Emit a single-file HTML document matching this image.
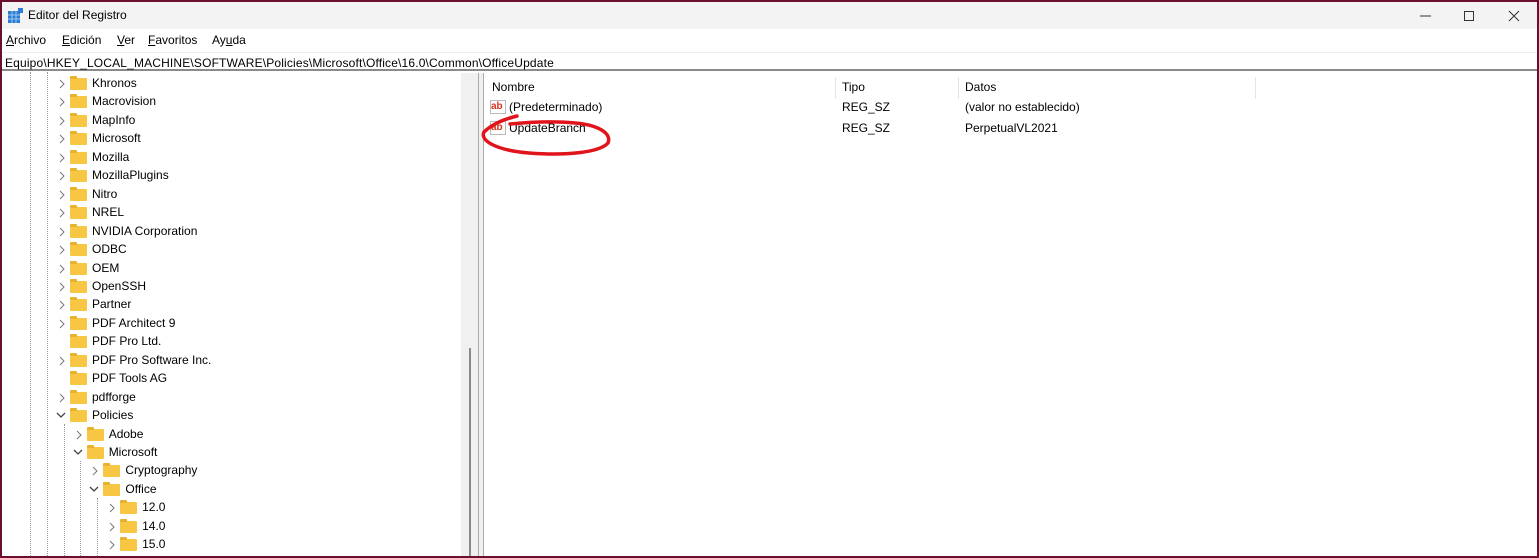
<!DOCTYPE html>
<html><head><meta charset="utf-8"><style>
*{margin:0;padding:0;box-sizing:border-box}
body{width:1539px;height:558px;overflow:hidden;background:#6b0f2e;font-family:"Liberation Sans",sans-serif;font-size:12px;color:#000;position:relative}
.win{position:absolute;left:2px;top:2px;width:1535px;height:554px;background:#fff;overflow:hidden}
.title{position:absolute;left:0;top:0;width:100%;height:27px;background:#f3f3f3}
.title span{position:absolute;left:26px;top:6px;font-size:12px}
.menu{position:absolute;top:31px;font-size:12px}
.menu span{position:absolute;white-space:nowrap}
.addr{position:absolute;top:50px;left:0;width:100%;height:19px;border-top:1px solid #eee;border-bottom:2px solid #8a8a8a}
.addr span{position:absolute;left:3px;top:3px;letter-spacing:0.16px}
.r{position:absolute;white-space:nowrap}
.f{position:absolute;width:17px;height:12px;background:#f7c744;border-radius:1px}
.f:before{content:"";position:absolute;left:0;top:-2px;width:7px;height:3px;background:#e8b22e;border-radius:1px 1px 0 0}
.vl{position:absolute;border-left:1px dotted #999;width:0}
</style></head><body><div class="win">
<div class="title">
<svg style="position:absolute;left:6px;top:6px" width="15" height="15"><rect x="0" y="3" width="12" height="12" fill="#2b7cd3"/><path d="M0 7H12M0 11H12M4 3V15M8 3V15" stroke="#9cc8f0" stroke-width="1"/><rect x="10" y="0" width="5" height="5" fill="#2b7cd3"/></svg>
<span>Editor del Registro</span>
<svg style="position:absolute;left:1415px;top:8px" width="115" height="14"><path d="M3 6H14" stroke="#333"/><path d="M47.5 1.5h9v9h-9z" fill="none" stroke="#333"/><path d="M92 1l10 10M102 1L92 11" stroke="#333"/></svg>
</div>
<div class="menu"><span style="left:4px"><u>A</u>rchivo</span><span style="left:60px"><u>E</u>dición</span><span style="left:115px"><u>V</u>er</span><span style="left:146px"><u>F</u>avoritos</span><span style="left:210px">Ay<u>u</u>da</span></div>
<div class="addr"><span>Equipo\HKEY_LOCAL_MACHINE\SOFTWARE\Policies\Microsoft\Office\16.0\Common\OfficeUpdate</span></div>
<div id="tree" style="position:absolute;left:0;top:70px;width:459px;height:484px"></div>
<div style="position:absolute;left:459px;top:71px;width:17px;height:483px;background:#f0f0f0"></div>
<div style="position:absolute;left:467px;top:346px;width:2px;height:210px;background:#8a8a8a"></div>
<div style="position:absolute;left:476px;top:71px;width:1px;height:483px;background:#aaa"></div>
<div style="position:absolute;left:481px;top:71px;width:1px;height:483px;background:#aaa"></div>
<div style="position:absolute;left:477px;top:71px;width:4px;height:483px;background:#f0f0f0"></div>
<div class="r" style="left:490px;top:78px">Nombre</div>
<div style="position:absolute;left:833px;top:75px;width:1px;height:22px;background:#e5e5e5"></div>
<div class="r" style="left:840px;top:78px">Tipo</div>
<div style="position:absolute;left:956px;top:75px;width:1px;height:22px;background:#e5e5e5"></div>
<div class="r" style="left:963px;top:78px">Datos</div>
<div style="position:absolute;left:1253px;top:75px;width:1px;height:22px;background:#e5e5e5"></div>
<div class="r" style="left:488px;top:98px;width:16px;height:14px;border:1px solid #bbb;background:#fff"><b style="position:absolute;left:0;top:0;color:#d8341c;font-size:10px">ab</b></div>
<div class="r" style="left:507px;top:98px">(Predeterminado)</div>
<div class="r" style="left:488px;top:119px;width:16px;height:14px;border:1px solid #bbb;background:#fff"><b style="position:absolute;left:0;top:0;color:#d8341c;font-size:10px">ab</b></div>
<div class="r" style="left:507px;top:119px">UpdateBranch</div>
<div class="r" style="left:840px;top:98px">REG_SZ</div><div class="r" style="left:963px;top:98px">(valor no establecido)</div>
<div class="r" style="left:840px;top:119px">REG_SZ</div><div class="r" style="left:963px;top:119px">PerpetualVL2021</div>
<svg style="position:absolute;left:0;top:0" width="700" height="200"><path d="M515 114C503 117 490 122 482 130C478 138 492 148 527 151C567 154 598 150 606 141C610 131 596 123 573 121C553 119 528 120 508 122" fill="none" stroke="#e0141a" stroke-width="3.5" stroke-linecap="round"/></svg>
</div>
<script>
var items=[["Khronos",0,">"],["Macrovision",0,">"],["MapInfo",0,">"],["Microsoft",0,">"],["Mozilla",0,">"],["MozillaPlugins",0,">"],["Nitro",0,">"],["NREL",0,">"],["NVIDIA Corporation",0,">"],["ODBC",0,">"],["OEM",0,">"],["OpenSSH",0,">"],["Partner",0,">"],["PDF Architect 9",0,">"],["PDF Pro Ltd.",0,""],["PDF Pro Software Inc.",0,">"],["PDF Tools AG",0,""],["pdfforge",0,">"],["Policies",0,"v"],["Adobe",1,">"],["Microsoft",1,"v"],["Cryptography",2,">"],["Office",2,"v"],["12.0",3,">"],["14.0",3,">"],["15.0",3,">"]];
var h="";
[28,45].forEach(function(x){h+='<div class="vl" style="left:'+x+'px;top:0;height:484px"></div>'});
h+='<div class="vl" style="left:62px;top:352px;height:132px"></div>';
h+='<div class="vl" style="left:78px;top:389px;height:95px"></div>';
h+='<div class="vl" style="left:95px;top:426px;height:58px"></div>';
items.forEach(function(it,i){var y=3+i*18.45,x=68+it[1]*16.7;
if(it[2]==">")h+='<svg style="position:absolute;left:'+(x-12)+'px;top:'+(y+4)+'px" width="8" height="10"><path d="M2 1l4 4-4 4" fill="none" stroke="#777"/></svg>';
else if(it[2]=="v")h+='<svg style="position:absolute;left:'+(x-14)+'px;top:'+(y+4)+'px" width="10" height="8"><path d="M1 2l4 4 4-4" fill="none" stroke="#444" stroke-width="1.3"/></svg>';
h+='<div class="f" style="left:'+x+'px;top:'+(y+3)+'px"></div><div class="r" style="left:'+(x+22)+'px;top:'+(y+1)+'px">'+it[0]+'</div>';});
document.getElementById("tree").innerHTML=h;
</script>
</body></html>
